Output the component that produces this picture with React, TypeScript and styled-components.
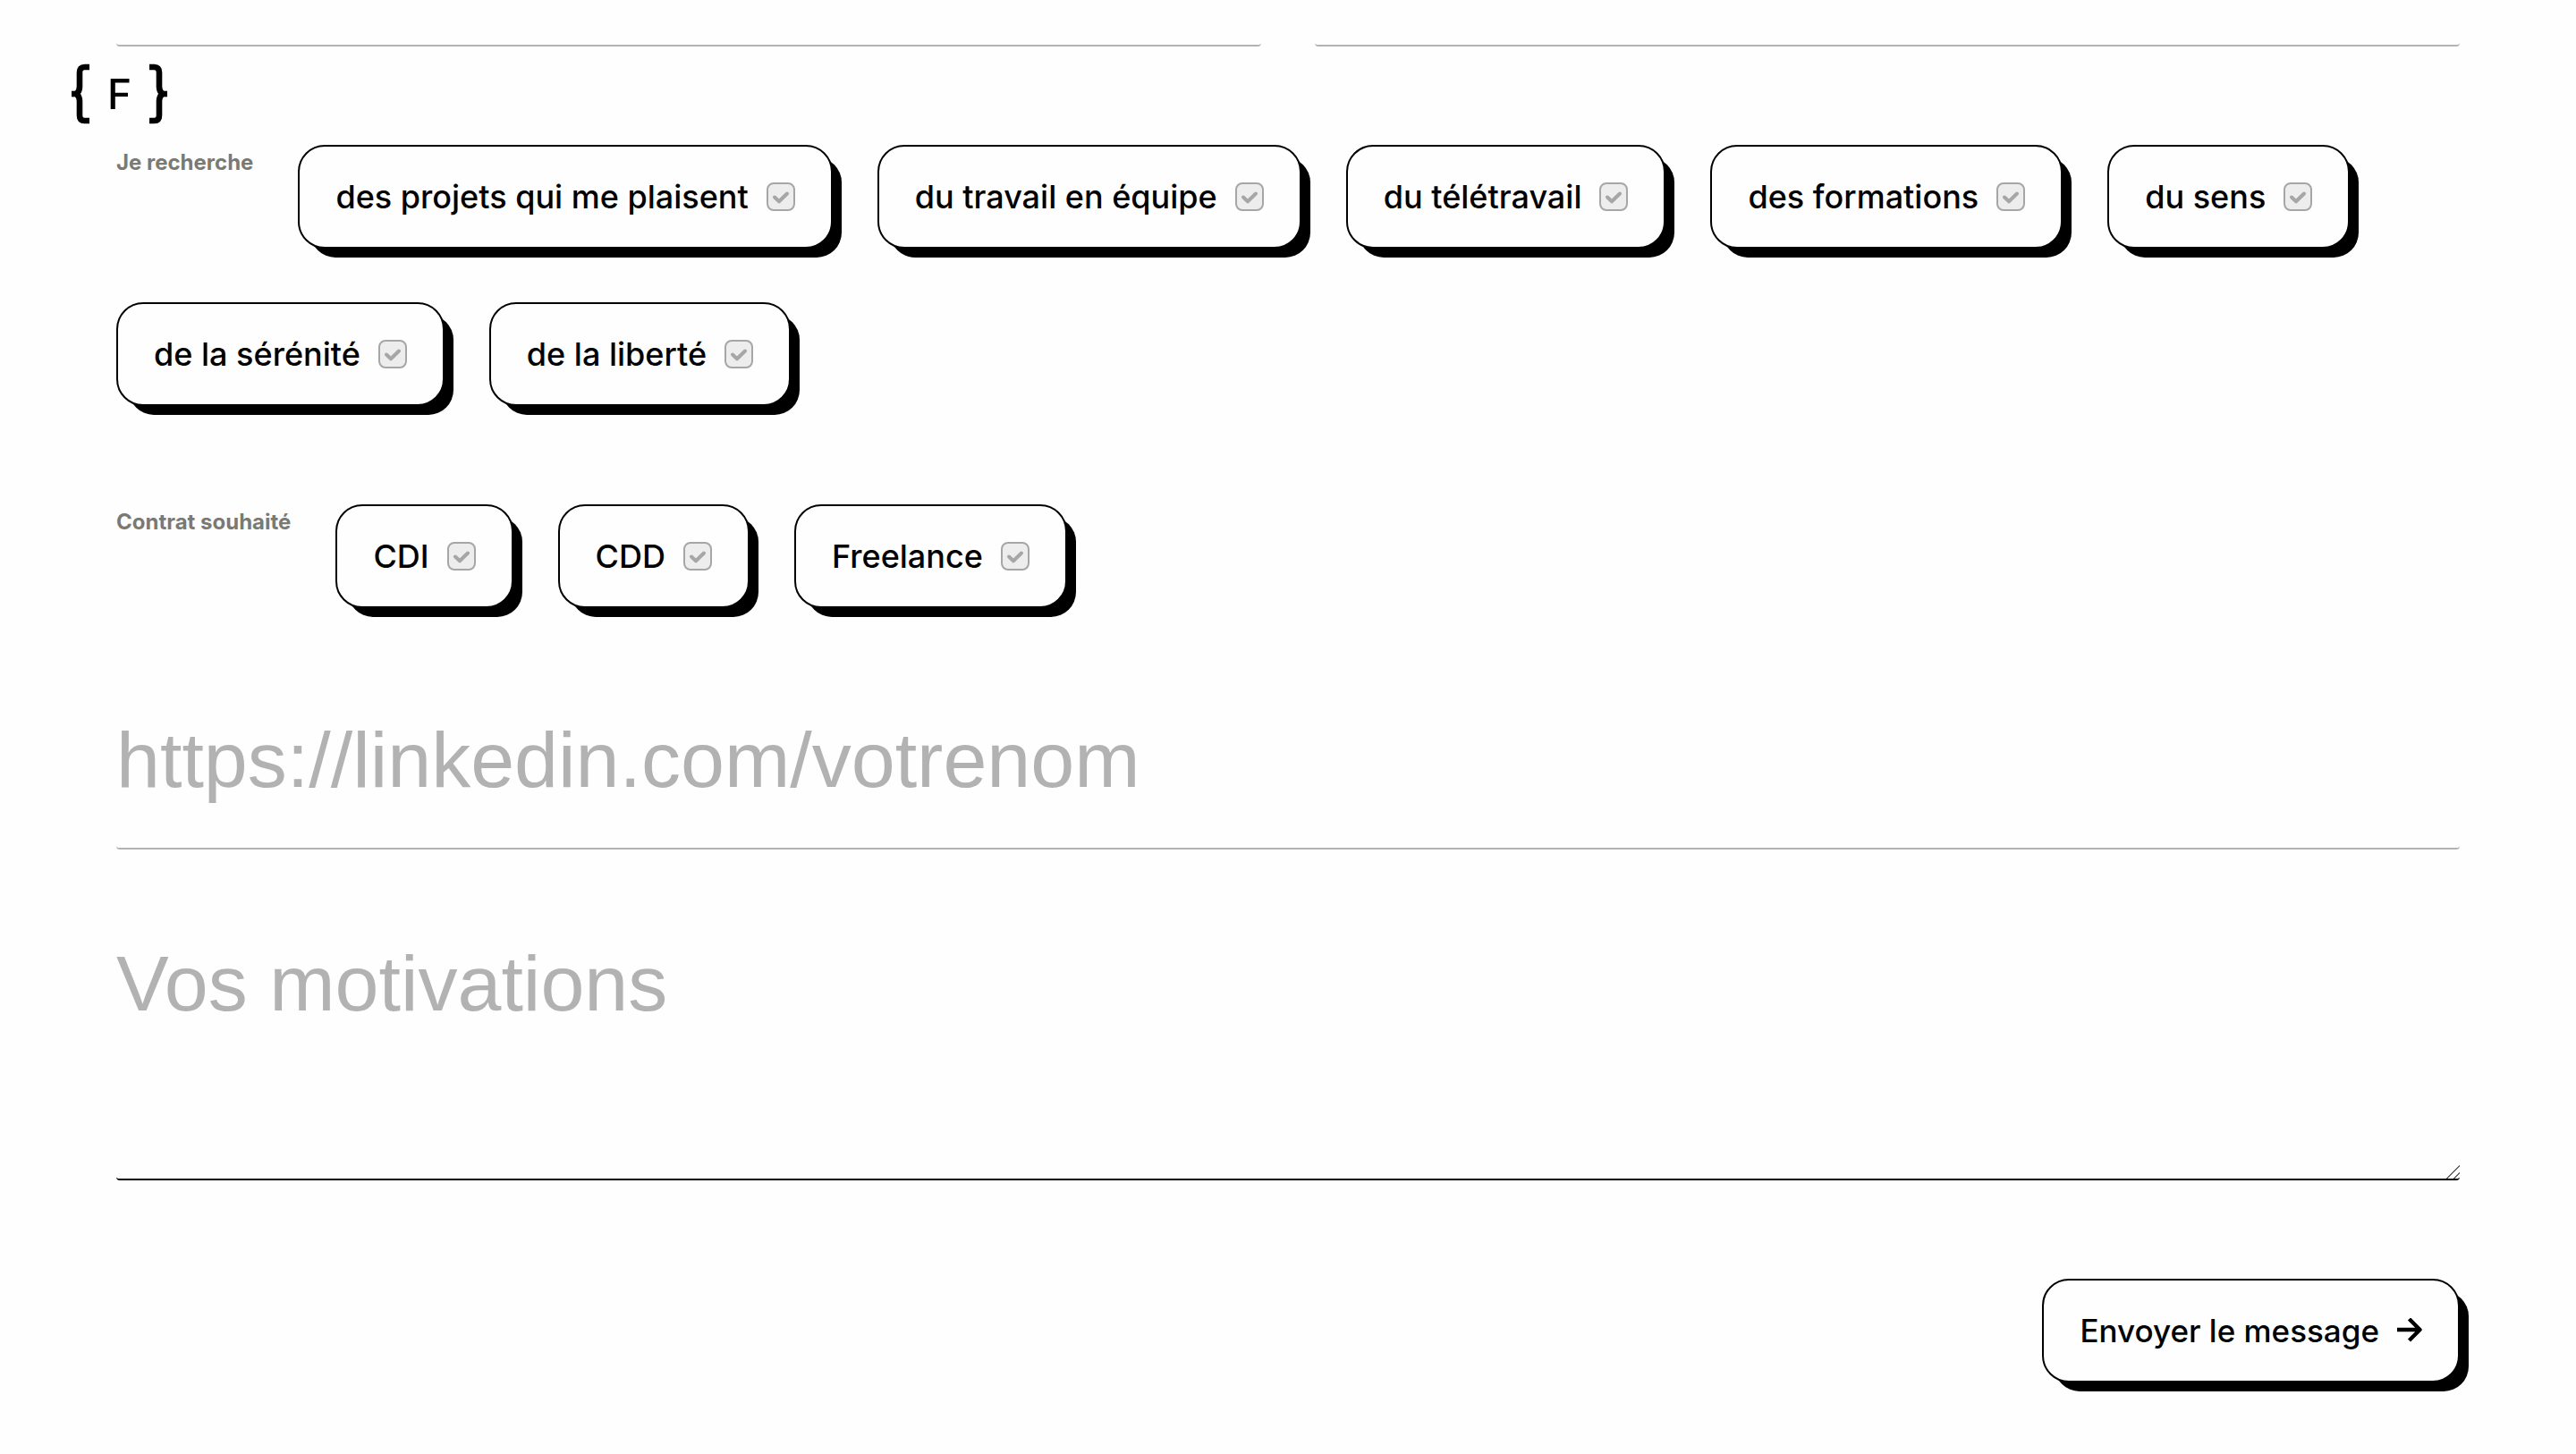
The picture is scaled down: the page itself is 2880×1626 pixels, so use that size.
import React from 'react';
import styled, { createGlobalStyle } from 'styled-components';

const GlobalStyle = createGlobalStyle`
  *, *::before, *::after { box-sizing: border-box; }
  body {
    margin: 0;
    background: #fefefe;
    color: #000;
    font-family: Inter, "Liberation Sans", sans-serif;
  }
`;

const LogoLink = styled.a`
  position: fixed;
  top: 71px;
  left: 80px;
  display: flex;
  align-items: center;
  gap: 20px;
  color: #000;
  text-decoration: none;
`;

const LogoBrace = styled.svg`
  display: block;
  width: 20px;
  height: 68px;
`;

const LogoLetter = styled.span`
  font-size: 46px;
  line-height: 66px;
  font-weight: 500;
`;

const Form = styled.form`
  display: flex;
  flex-direction: column;
  padding: 0 130px 80px;
`;

const FieldRow = styled.div`
  display: grid;
  grid-template-columns: 1fr 1fr;
  gap: 60px;
`;

const fieldBase = `
  display: block;
  width: 100%;
  border: 0 solid #b2b2b2;
  border-bottom-width: 2px;
  border-radius: 4px;
  background: transparent;
  color: #000;
  font-family: "Liberation Sans", Arial, sans-serif;
  font-size: 88px;
  line-height: 120px;
  outline: none;
  &::placeholder { color: #b2b2b2; opacity: 1; }
`;

const ShortInput = styled.input`
  ${fieldBase}
  height: 52px;
  padding: 0;
  font-size: 36px;
  line-height: 48px;
`;

const LargeInput = styled.input`
  ${fieldBase}
  height: 160px;
  margin-top: 110px;
  padding: 0 0 38px;
`;

const MessageArea = styled.textarea`
  ${fieldBase}
  height: 280px;
  margin-top: 90px;
  padding: 0;
  border-color: #000;
  resize: vertical;
  &::-webkit-scrollbar { width: 18px; height: 18px; }
  &::-webkit-resizer {
    background: linear-gradient(
      135deg,
      transparent 0 49%, #666 49% 56%,
      transparent 56% 75%, #666 75% 82%,
      transparent 82%
    );
  }
`;

const Choices = styled.div`
  display: flex;
  flex-wrap: wrap;
  align-items: flex-start;
  gap: 60px 50px;
  margin-top: 110px;
`;

const ChoicesTitle = styled.span`
  color: #7a7a74;
  font-size: 24px;
  line-height: 40px;
  font-weight: 700;
`;

const raised = `
  display: flex;
  align-items: center;
  gap: 20px;
  padding: 32px 40px;
  border: 2px solid #000;
  border-radius: 30px;
  background: #fefefe;
  box-shadow: 12px 12px 0 -2px #000;
  color: #000;
  font-family: Inter, "Liberation Sans", sans-serif;
  line-height: 48px;
  font-weight: 500;
  white-space: nowrap;
  cursor: pointer;
`;

const Chip = styled.label`
  ${raised}
  font-size: 36px;
`;

const Tick = styled.span`
  display: grid;
  width: 32px;
  height: 32px;
  color: #a6a6a6;
  & > * { grid-area: 1 / 1; }
  & > svg { pointer-events: none; }
`;

const Checkbox = styled.input`
  appearance: none;
  width: 32px;
  height: 32px;
  margin: 0;
  border: 2px solid #a6a6a6;
  border-radius: 8px;
  background: #ededed;
  cursor: pointer;
  &:checked { background: #000; border-color: #000; }
`;

const SubmitButton = styled.button`
  ${raised}
  align-self: flex-end;
  margin-top: 110px;
  font-size: 35px;
`;

const Arrow = styled.svg`
  display: block;
  width: 28px;
  height: 28px;
`;

const bracePath = 'M20 4H14.5Q9 4 9 10V26Q9 31 5.500 34Q9 37 9 42V58Q9 64 14.500 64H20';

function Brace({ mirrored }: { mirrored?: boolean }) {
  return (
    <LogoBrace viewBox="0 0 20 68" aria-hidden="true">
      <g transform={mirrored ? 'translate(20 0) scale(-1 1)' : undefined}>
        <path d={bracePath} fill="none" stroke="currentColor" strokeWidth="6.600" />
        <path d="M0 34H7" stroke="currentColor" strokeWidth="6.600" />
      </g>
    </LogoBrace>
  );
}

function ChoiceGroup({ id, title, options }: { id: string; title: string; options: string[] }) {
  return (
    <Choices role="group" aria-labelledby={id}>
      <ChoicesTitle id={id}>{title}</ChoicesTitle>
      {options.map((option) => (
        <Chip key={option}>
          {option}
          <Tick>
            <Checkbox type="checkbox" name={id} value={option} />
            <svg viewBox="0 0 32 32" width="32" height="32" aria-hidden="true">
              <path
                d="M9 16.500L14 21.300L23 12.500"
                fill="none"
                stroke="currentColor"
                strokeWidth="4"
                strokeLinecap="round"
                strokeLinejoin="round"
              />
            </svg>
          </Tick>
        </Chip>
      ))}
    </Choices>
  );
}

const searches = [
  'des projets qui me plaisent',
  'du travail en équipe',
  'du télétravail',
  'des formations',
  'du sens',
  'de la sérénité',
  'de la liberté',
];

const contracts = ['CDI', 'CDD', 'Freelance'];

export default function App() {
  return (
    <>
      <GlobalStyle />
      <LogoLink href="#" aria-label="Accueil">
        <Brace />
        <LogoLetter>F</LogoLetter>
        <Brace mirrored />
      </LogoLink>
      <Form onSubmit={(event) => event.preventDefault()}>
        <FieldRow>
          <ShortInput type="email" aria-label="Adresse e-mail" />
          <ShortInput type="tel" aria-label="Téléphone" />
        </FieldRow>
        <ChoiceGroup id="recherche" title="Je recherche" options={searches} />
        <ChoiceGroup id="contrat" title="Contrat souhaité" options={contracts} />
        <LargeInput
          type="url"
          aria-label="Profil LinkedIn"
          placeholder="https://linkedin.com/votrenom"
        />
        <MessageArea aria-label="Vos motivations" placeholder="Vos motivations" />
        <SubmitButton type="submit">
          Envoyer le message
          <Arrow viewBox="0 0 28 28" aria-hidden="true">
            <path
              d="M0 13H26M13.500 1L25.500 13L13.500 25"
              fill="none"
              stroke="currentColor"
              strokeWidth="4.400"
              strokeLinejoin="round"
            />
          </Arrow>
        </SubmitButton>
      </Form>
    </>
  );
}
